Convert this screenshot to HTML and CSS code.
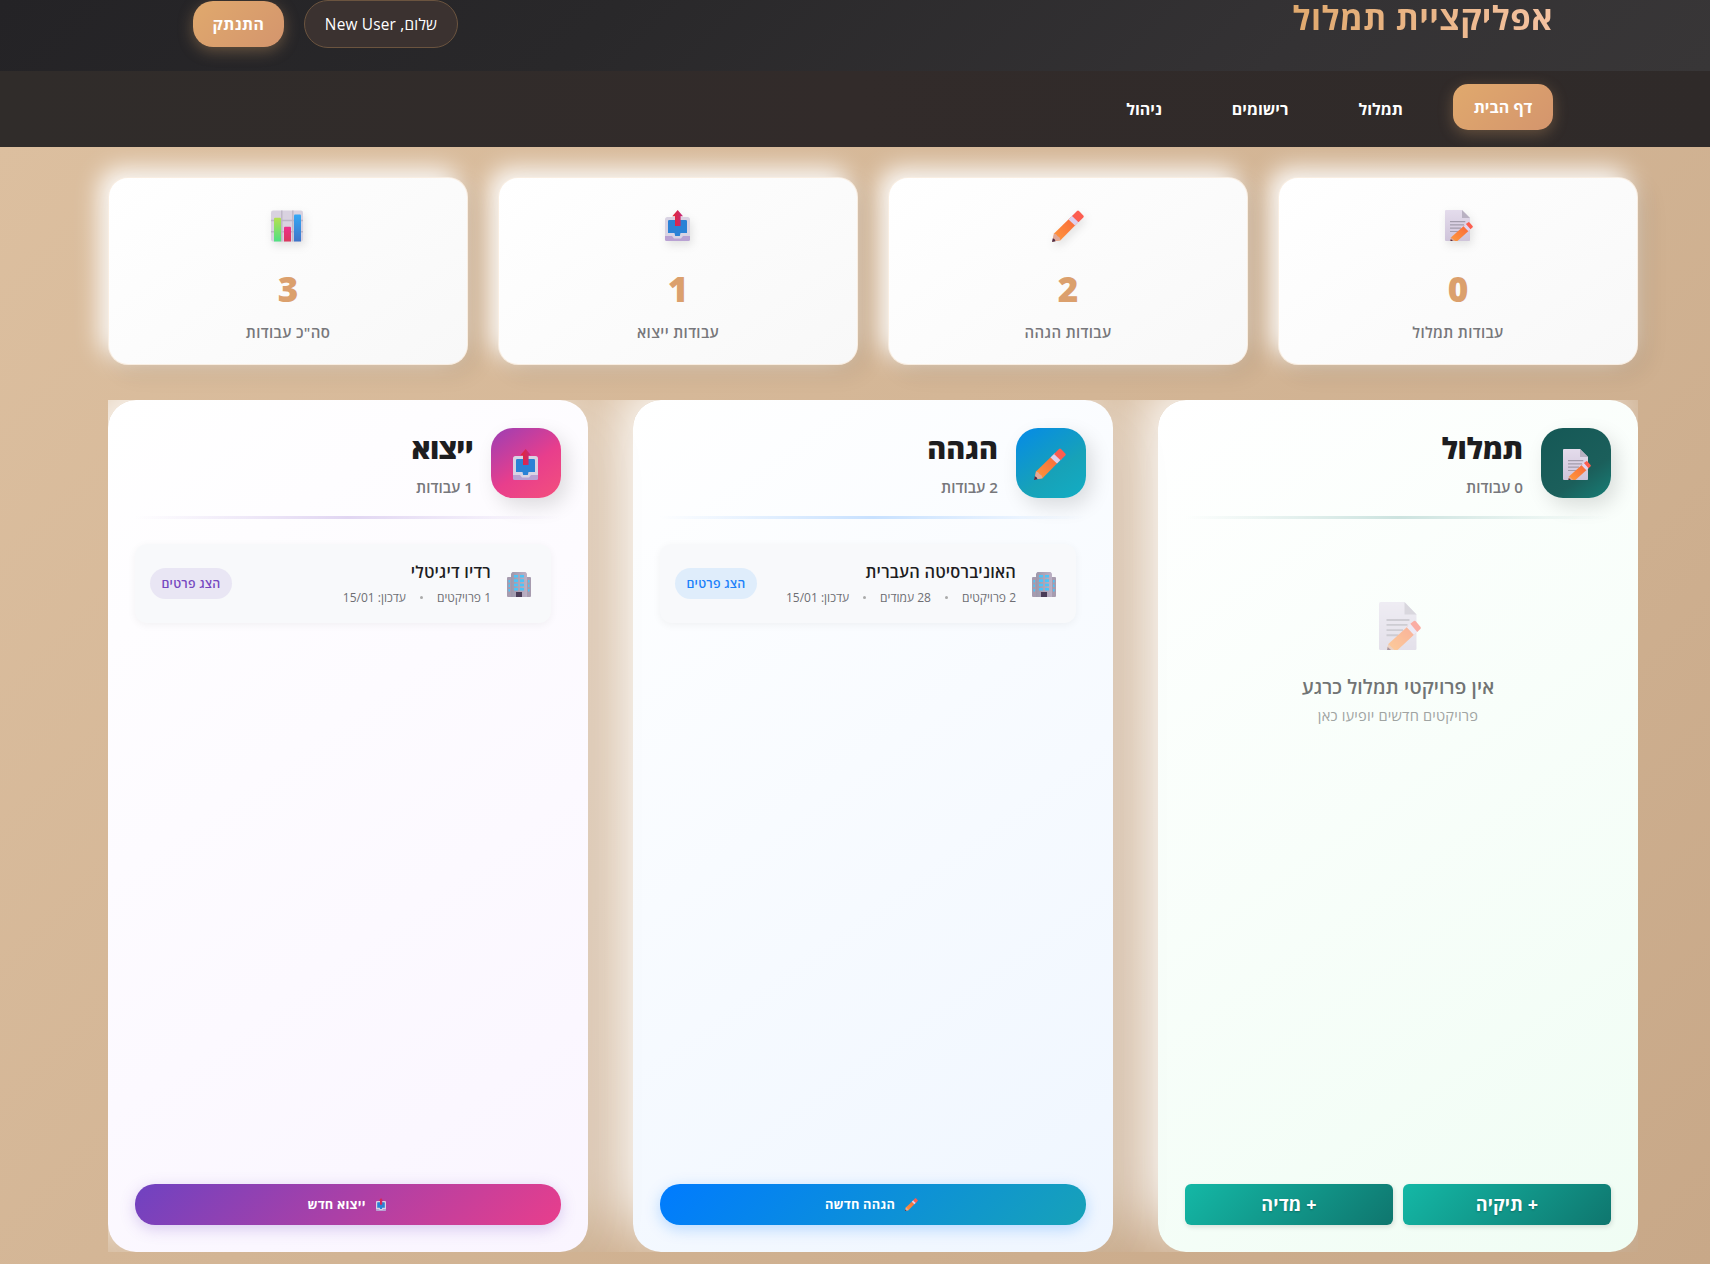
FILE: index.html
```html
<!DOCTYPE html>
<html lang="he" dir="rtl">
<head>
<meta charset="utf-8">
<title>אפליקציית תמלול</title>
<link rel="stylesheet" href="styles.css">
</head>
<body>
<svg class="sprite" aria-hidden="true">
  <defs>
    <linearGradient id="paper" x1="0" y1="0" x2="0" y2="1"><stop offset="0" stop-color="#e4dcec"/><stop offset="1" stop-color="#cfc4da"/></linearGradient>
    <linearGradient id="wood" x1="0" y1="1" x2="1" y2="0"><stop offset="0" stop-color="#ff9a3c"/><stop offset="1" stop-color="#f8653a"/></linearGradient>
    <linearGradient id="arrow" x1="0" y1="0" x2="1" y2="0"><stop offset="0" stop-color="#e8262f"/><stop offset="1" stop-color="#c2297f"/></linearGradient>
    <linearGradient id="green" x1="0" y1="0" x2="0" y2="1"><stop offset="0" stop-color="#b5e050"/><stop offset="1" stop-color="#4fe083"/></linearGradient>
    <linearGradient id="pink" x1="0" y1="0" x2="0" y2="1"><stop offset="0" stop-color="#ee2f8c"/><stop offset="1" stop-color="#d93a5c"/></linearGradient>
    <linearGradient id="blue" x1="0" y1="0" x2="0" y2="1"><stop offset="0" stop-color="#35a8f5"/><stop offset="1" stop-color="#3f74c8"/></linearGradient>
    <linearGradient id="wall" x1="0" y1="0" x2="1" y2="0"><stop offset="0" stop-color="#9d98ab"/><stop offset="1" stop-color="#bcb0c4"/></linearGradient>
  </defs>
  <symbol id="memo" viewBox="0 0 28 31" preserveAspectRatio="none">
    <path d="M1 0H17L25 8V30.2a.8.8 0 0 1-.8.8H1a1 1 0 0 1-1-1V1a1 1 0 0 1 1-1Z" fill="url(#paper)"/>
    <path d="M17 0L25 8H17Z" fill="#b9b1c2"/>
    <path d="M5 11.6H20.3M5 14.8H19M5 18.2H16M5 21.5H13" stroke="#a39cac" stroke-width="1.2"/>
    <path d="M5.4 31L6.2 27.2L19.6 15.3L24.4 20.2L12.4 31Z" fill="url(#wood)"/>
    <path d="M5.4 31L6.2 27.2L10.4 31Z" fill="#dfa68d"/><path d="M5.4 31L5.8 29L8 31Z" fill="#54304d"/>
    <path d="M18.5 16.3L21.4 13.7L26 18.8L23.3 21.3Z" fill="#e2d5f0"/>
    <path d="M20.9 14.1L23 12.4Q23.8 11.8 24.5 12.5L27.6 16Q28.2 16.9 27.4 17.6L25.5 19.3Z" fill="#fb5e4f"/>
  </symbol>
  <symbol id="pencil" viewBox="0 0 32 32">
    <path d="M.5 31.5L2 23.5L19.5 6.5L26 12.5L8.5 30.3Z" fill="url(#wood)"/>
    <path d="M.5 31.5L2 23.5Q4.500 23.5 5.500 26Q8.300 27 8.500 30.300Z" fill="#e0a99a"/>
    <path d="M0 32L.8 28.300Q3 29 3.600 31.300Z" fill="#4d2b45"/>
    <path d="M16.500 9.500L21 5L27.500 11L23 15.500Z" fill="#ddd0ee"/>
    <path d="M20 6L25 .9Q26 0 27 .9L31.300 5.400Q32.200 6.500 31.300 7.500L26.500 12.200Z" fill="#fc5d50"/>
  </symbol>
  <symbol id="outbox" viewBox="0 0 25 31" preserveAspectRatio="none">
    <rect y="20" width="25" height="11" rx="1.500" fill="#b9a2d3"/>
    <path d="M2.500 7H22.500A2.500 2.500 0 0 1 25 9.500V26H18L16 28.500H9L7 26H0V9.500A2.500 2.500 0 0 1 2.500 7Z" fill="#d9d3e3"/>
    <path d="M4.200 10H20.800A1.200 1.200 0 0 1 22 11.200V23H15.500L14.800 26H10.200L9.500 23H3V11.200A1.200 1.200 0 0 1 4.200 10Z" fill="#2b82d6"/>
    <path d="M12.700 0L18 6.300H15.600V16H10V6.300H7.300Z" fill="url(#arrow)"/>
  </symbol>
  <symbol id="chart" viewBox="0 0 32 31">
    <rect width="32" height="31" rx="2" fill="#d9d2e0"/>
    <path d="M10.800 0V31M21.800 0V31M0 10H32M0 21.300H32" stroke="#bdb5c6" stroke-width="1.400"/>
    <path d="M3 8.200A1 1 0 0 1 4 7.200H9A1 1 0 0 1 10 8.200V31H3Z" fill="url(#green)"/>
    <path d="M13 17.200A1 1 0 0 1 14 16.200H19A1 1 0 0 1 20 17.200V31H13Z" fill="url(#pink)"/>
    <path d="M23 5A1 1 0 0 1 24 4H29A1 1 0 0 1 30 5V31H23Z" fill="url(#blue)"/>
  </symbol>
  <symbol id="office" viewBox="0 0 24 25">
    <rect y="5" width="24" height="20" rx="1" fill="#a79caf"/>
    <path d="M5.500 0H18.500L20 1.500V25H4V1.500Z" fill="url(#wall)"/>
    <path d="M7 3H11V5.500H7ZM13 3H17V5.500H13ZM7 7.300H11V10H7ZM13 7.300H17V10H13ZM7 11.700H11V14.300H7ZM13 11.700H17V14.300H13ZM7 16H11V18.500H7ZM13 16H17V18.500H13ZM1.500 8H3V10.500H1.500ZM1.500 12.500H3V15H1.500ZM1.500 17H3V19.500H1.500ZM21 8H22.500V10.500H21ZM21 12.500H22.500V15H21ZM21 17H22.500V19.500H21Z" fill="#4dc3f7"/>
    <rect x="9" y="20" width="6" height="5" fill="#4a3c57"/>
  </symbol>
</svg>

<header class="header">
  <h1 class="brand">אפליקציית תמלול</h1>
  <div class="account">
    <span class="greeting">שלום, New User</span>
    <button class="logout">התנתק</button>
  </div>
</header>
<nav class="nav">
  <a class="nav-link active">דף הבית</a>
  <a class="nav-link">תמלול</a>
  <a class="nav-link">רישומים</a>
  <a class="nav-link">ניהול</a>
</nav>

<main class="main">
  <section class="stats">
    <div class="stat"><svg class="stat-icon memo"><use href="#memo"/></svg><div class="stat-number">0</div><div class="stat-label">עבודות תמלול</div></div>
    <div class="stat"><svg class="stat-icon"><use href="#pencil"/></svg><div class="stat-number">2</div><div class="stat-label">עבודות הגהה</div></div>
    <div class="stat"><svg class="stat-icon outbox"><use href="#outbox"/></svg><div class="stat-number">1</div><div class="stat-label">עבודות ייצוא</div></div>
    <div class="stat"><svg class="stat-icon chart"><use href="#chart"/></svg><div class="stat-number">3</div><div class="stat-label">סה"כ עבודות</div></div>
  </section>

  <section class="columns">
    <article class="column transcribe">
      <div class="column-head">
        <div class="badge"><svg class="badge-icon memo"><use href="#memo"/></svg></div>
        <div><h2 class="column-title">תמלול</h2><p class="column-count">0 עבודות</p></div>
      </div>
      <div class="divider"></div>
      <div class="column-body">
        <div class="empty">
          <svg class="empty-icon"><use href="#memo"/></svg>
          <p class="empty-title">אין פרויקטי תמלול כרגע</p>
          <p class="empty-sub">פרויקטים חדשים יופיעו כאן</p>
        </div>
      </div>
      <div class="actions">
        <button class="add">+ תיקיה</button>
        <button class="add">+ מדיה</button>
      </div>
    </article>

    <article class="column proof">
      <div class="column-head">
        <div class="badge"><svg class="badge-icon"><use href="#pencil"/></svg></div>
        <div><h2 class="column-title">הגהה</h2><p class="column-count">2 עבודות</p></div>
      </div>
      <div class="divider"></div>
      <div class="column-body">
        <div class="item">
          <svg class="item-icon"><use href="#office"/></svg>
          <div class="item-text">
            <h3 class="item-title">האוניברסיטה העברית</h3>
            <p class="meta"><span>2 פרויקטים</span><i class="dot"></i><span>28 עמודים</span><i class="dot"></i><span>עדכון: 15/01</span></p>
          </div>
          <button class="details">הצג פרטים</button>
        </div>
      </div>
      <div class="actions">
        <button class="new"><svg class="new-icon"><use href="#pencil"/></svg><span>הגהה חדשה</span></button>
      </div>
    </article>

    <article class="column export">
      <div class="column-head">
        <div class="badge"><svg class="badge-icon outbox"><use href="#outbox"/></svg></div>
        <div><h2 class="column-title">ייצוא</h2><p class="column-count">1 עבודות</p></div>
      </div>
      <div class="divider"></div>
      <div class="column-body">
        <div class="item">
          <svg class="item-icon"><use href="#office"/></svg>
          <div class="item-text">
            <h3 class="item-title">רדיו דיגיטלי</h3>
            <p class="meta"><span>1 פרויקטים</span><i class="dot"></i><span>עדכון: 15/01</span></p>
          </div>
          <button class="details">הצג פרטים</button>
        </div>
      </div>
      <div class="actions">
        <button class="new"><svg class="new-icon outbox"><use href="#outbox"/></svg><span>ייצוא חדש</span></button>
      </div>
    </article>
  </section>
</main>
</body>
</html>
```
FILE: styles.css
```css
* { box-sizing: border-box; margin: 0; padding: 0; }
body {
  height: 1264px;
  overflow: hidden;
  font-family: "Open Sans", "Noto Sans", sans-serif;
  color: #1d1d1f;
  background: linear-gradient(135deg, #ddc0a0 0%, #d3b595 50%, #c8a888 100%);
}
button { border: 0; font-family: inherit; color: #fff; white-space: nowrap; }
.sprite { position: absolute; width: 0; height: 0; }

.header {
  display: flex;
  justify-content: space-between;
  align-items: flex-start;
  height: 71px;
  padding: 0 157px 0 193px;
  background: linear-gradient(135deg, #242326 0%, #29282a 35%, #343234 75%, #383637 100%);
}
.brand {
  padding: 0 0 8px 2px;
  font-size: 33px;
  line-height: 35px;
  font-weight: 700;
  letter-spacing: .45px;
  color: transparent;
  background: linear-gradient(90deg, #e0a96d, #f4c2a1);
  background-clip: text;
  -webkit-background-clip: text;
}
.account { display: flex; gap: 20px; align-items: flex-start; }
.greeting {
  width: 154px;
  height: 48px;
  border: 1px solid #6b543f;
  border-radius: 24px;
  background: #3b3230;
  color: #fff;
  font-size: 15.4px;
  letter-spacing: .2px;
  line-height: 48px;
  text-align: center;
  white-space: nowrap;
}
.logout {
  width: 91px;
  height: 46px;
  margin-top: 1px;
  border-radius: 20px;
  background: linear-gradient(135deg, #e0a96d, #d4956d);
  box-shadow: 0 4px 15px rgba(224, 169, 109, .35);
  font-size: 15.8px;
  font-weight: 700;
  letter-spacing: .5px;
}

.nav {
  position: relative;
  display: flex;
  gap: 30px;
  height: 76px;
  padding: 13px 157px 0 0;
  background: linear-gradient(90deg, #302c2a, #322b2a 50%, #2f2a29);
}
.nav-link {
  height: 46px;
  padding: 0 20px;
  color: #fff;
  font-size: 16px;
  line-height: 50px;
  font-weight: 700;
}
.nav-link.active {
  width: 100px;
  border-radius: 15px;
  line-height: 46px;
  text-align: center;
  white-space: nowrap;
  background: linear-gradient(135deg, #e0a96d, #d4956d);
  box-shadow: 0 4px 15px rgba(224, 169, 109, .3);
}

.main { padding: 30px 72px 0 108px; }
.stats { display: grid; grid-template-columns: repeat(4, 1fr); gap: 30px; }
.stat {
  display: flex;
  flex-direction: column;
  align-items: center;
  height: 188px;
  padding-top: 32px;
  border: 1px solid rgba(224, 169, 109, .2);
  border-radius: 20px;
  background: linear-gradient(145deg, #fff, #f8f8f8) padding-box, #fff;
  box-shadow: 8px 8px 25px rgba(0, 0, 0, .08), -8px -8px 25px rgba(255, 255, 255, 1);
}
.stat-icon { width: 32px; height: 32px; filter: drop-shadow(2px 4px 4px rgba(0, 0, 0, .1)); }
.stat-icon.memo { width: 28px; height: 31px; margin: 0 0 1px; transform: translateX(1px); }
.stat-icon.outbox { width: 25px; height: 31px; margin-bottom: 1px; transform: translateX(-1px); }
.stat-icon.chart { transform: translateX(-1px); }
.stat-number { margin-top: 22px; font-size: 35.2px; line-height: 48px; font-weight: 800; color: #dba06d; }
.stat-label { margin-top: 9px; font-size: 15px; line-height: 23px; font-weight: 600; letter-spacing: .35px; color: #77777b; }

.columns {
  display: grid;
  grid-template-columns: repeat(3, 480px);
  gap: 45px;
  height: 852px;
  margin-top: 35px;
  overflow: hidden;
}
.column {
  display: flex;
  flex-direction: column;
  padding: 28px 27px 27px;
  border-radius: 28px;
  box-shadow: 20px 20px 60px rgba(0, 0, 0, .03), -20px -20px 60px rgba(255, 255, 255, .95);
}
.transcribe { background: linear-gradient(145deg, #fff, #f0fdf4); }
.proof { background: linear-gradient(145deg, #fff, #eff6ff); }
.export { background: linear-gradient(145deg, #fff, #faf5ff); }

.column-head { display: flex; gap: 18px; height: 70px; }
.badge {
  display: flex;
  align-items: center;
  justify-content: center;
  width: 70px;
  height: 70px;
  border-radius: 22px;
  box-shadow: 6px 8px 20px rgba(0, 0, 0, .13);
}
.transcribe .badge { padding: 2px 0 0 2px; background: linear-gradient(145deg, #155856, #1b5f5b 65%, #177e76); }
.proof .badge { padding: 2px 2px 0 0; background: linear-gradient(145deg, #058ae8, #17a2b8 60%, #12adc4); }
.export .badge { padding: 2px 2px 0 0; background: linear-gradient(145deg, #9b3fb5, #e83e8c 55%, #f3507d); }
.badge-icon { width: 32px; height: 32px; }
.badge-icon.memo { width: 28px; height: 31px; }
.badge-icon.outbox { width: 25px; height: 31px; }
.column-title { height: 42px; font-size: 28.8px; line-height: 40px; font-weight: 800; }
.export .column-title { letter-spacing: -.6px; }
.column-count { margin-top: 7px; font-size: 15.2px; line-height: 20px; font-weight: 600; color: #77777b; }
.divider { height: 3px; margin-top: 18px; }
.transcribe .divider { background: linear-gradient(90deg, transparent, #cce3df, transparent); }
.proof .divider { background: linear-gradient(90deg, transparent, #c8e1ff, transparent); }
.export .divider { background: linear-gradient(90deg, transparent, #e1d6f2, transparent); }
.column-body { flex: 1; padding-top: 25px; }

.item {
  display: flex;
  align-items: center;
  height: 79px;
  margin-right: 10px;
  padding: 0 20px 0 15px;
  border-radius: 12px;
  background: #f8f9fb;
  box-shadow: 0 2px 8px rgba(0, 0, 0, .05);
}
.item-icon { width: 24px; height: 25px; margin-top: 2px; }
.item-text { flex: 1; margin-right: 16px; }
.item-title { font-size: 16.4px; line-height: 24px; font-weight: 600; letter-spacing: .2px; }
.meta { display: flex; align-items: center; margin-top: 4px; font-size: 12px; line-height: 20px; color: #6e6e73; white-space: nowrap; }
.dot { width: 3px; height: 3px; margin: 0 14px; border-radius: 50%; background: #aaa; }
.details { width: 82px; height: 31px; border-radius: 16px; font-size: 12.4px; font-weight: 600; letter-spacing: .25px; }
.proof .details { background: #dfedfb; color: #1a80fa; }
.export .details { background: #e9e6f4; color: #7548c0; }

.empty { display: flex; flex-direction: column; align-items: center; padding-top: 58px; }
.empty-icon { width: 42px; height: 48px; margin-left: -4px; transform: translateX(4px); opacity: .5; }
.empty-title { margin-top: 22px; font-size: 19.4px; line-height: 30px; font-weight: 600; letter-spacing: .1px; color: #717474; }
.empty-sub { margin-top: 1px; font-size: 14.6px; line-height: 24px; letter-spacing: .2px; color: #a0a4a2; }

.actions { display: flex; gap: 10px; height: 41px; }
.add {
  flex: 1;
  padding-bottom: 1px;
  border-radius: 6px;
  background: linear-gradient(135deg, #14b8a6, #0f766e);
  box-shadow: 1px 2px 5px rgba(0, 0, 0, .12);
  font-size: 18px;
  font-weight: 700;
  letter-spacing: .2px;
  text-shadow: 0 1px 2px rgba(0, 0, 0, .25);
}
.new {
  display: flex;
  flex: 1;
  align-items: center;
  justify-content: center;
  gap: 10px;
  padding: 0 3px 1px 0;
  border-radius: 20px;
  font-size: 12.8px;
  font-weight: 700;
  letter-spacing: .2px;
}
.new-icon { width: 13px; height: 13px; }
.new-icon.outbox { width: 10px; }
.proof .new { background: linear-gradient(135deg, #007bff, #17a2b8); box-shadow: 0 4px 15px rgba(0, 123, 255, .25); }
.export .new { background: linear-gradient(135deg, #6f42c1, #e83e8c); box-shadow: 0 4px 15px rgba(111, 66, 193, .25); }
```
